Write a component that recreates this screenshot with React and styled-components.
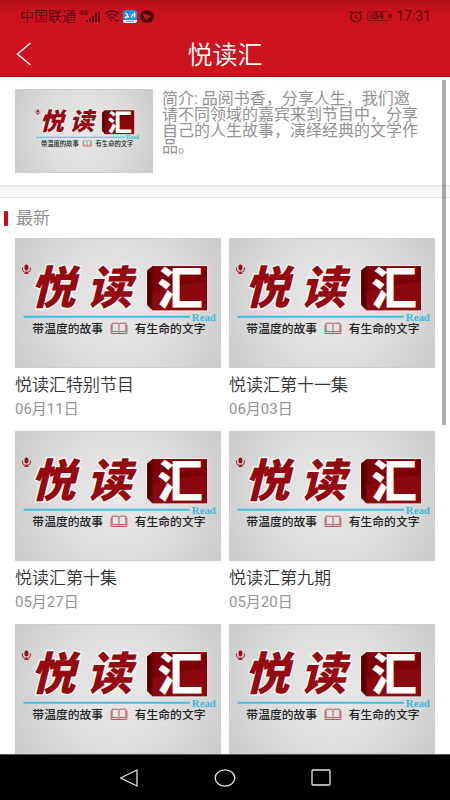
import React from 'react';
import styled, { createGlobalStyle } from 'styled-components';

const GlobalStyle = createGlobalStyle`
  * {
    box-sizing: border-box;
  }

  body {
    margin: 0;
    background: #fff;
    font-family: Roboto, 'Noto Sans CJK SC', sans-serif;
  }
`;

const Screen = styled.div`
  display: flex;
  flex-direction: column;
  height: 100vh;
`;

const Header = styled.header`
  flex: none;
  background: linear-gradient(#b3101a, #cd131d 14px);
  border-bottom: 1px solid #a80d16;
`;

const StatusBar = styled.div`
  display: flex;
  align-items: center;
  justify-content: space-between;
  height: 32px;
  padding: 0 19px 0 20px;
  color: #5c0a10;
  font-size: 14px;
  line-height: 16px;
`;

const StatusGroup = styled.div`
  display: flex;
  align-items: center;
  gap: ${({ $gap }) => $gap}px;
`;

const TitleBar = styled.div`
  display: grid;
  grid-template-columns: 48px 1fr 48px;
  align-items: center;
  height: 44px;
`;

const BackButton = styled.button`
  display: flex;
  align-items: center;
  justify-content: center;
  height: 44px;
  padding: 0;
  border: none;
  background: transparent;
  cursor: pointer;
`;

const PageTitle = styled.h1`
  margin: 0;
  padding-top: 4px;
  color: #fff;
  font-size: 25px;
  font-weight: 350;
  line-height: 40px;
  text-align: center;
`;

const Content = styled.main`
  position: relative;
  flex: 1;
  min-height: 0;
  overflow: hidden;
`;

const ScrollThumb = styled.div`
  position: absolute;
  top: 3px;
  right: 4px;
  width: 4px;
  height: 51%;
  background: rgba(0, 0, 0, 0.32);
`;

const Intro = styled.section`
  display: flex;
  gap: 9px;
  padding: 12px 28px 12px 15px;
`;

const IntroText = styled.p`
  flex: 1;
  margin: 2px 0 0;
  color: #939393;
  font-size: 16px;
  font-weight: 400;
  line-height: 16px;
`;

const Divider = styled.div`
  height: 13px;
  background: #f8f8f8;
  border-top: 2px solid #ececec;
  border-bottom: 1px solid #e6e6e6;
`;

const SectionTitle = styled.h2`
  display: flex;
  align-items: center;
  gap: 8px;
  margin: 0;
  padding: 0 4px;
  color: #888;
  font-size: 17px;
  font-weight: 350;
  line-height: 40px;

  &::before {
    content: '';
    width: 4px;
    height: 15px;
    border-radius: 1px;
    background: #cc0a15;
  }
`;

const Grid = styled.div`
  display: grid;
  grid-template-columns: 1fr 1fr;
  gap: 11px 8px;
  padding: 0 15px;
`;

const Card = styled.a`
  display: block;
  color: #333;
  text-decoration: none;
`;

const Cover = styled.div`
  flex: none;
  width: ${({ $small }) => ($small ? '138px' : '100%')};
  height: ${({ $small }) => ($small ? '84px' : '130px')};
  border: 1px solid #cdcdcf;
  background: radial-gradient(circle at 50% 50%, #e8e8e8, #dedede 50%, #cbcbcd);

  svg {
    display: block;
    width: 100%;
    height: 100%;
  }
`;

const CardTitle = styled.h3`
  margin: 4px 0 0;
  font-size: 17px;
  font-weight: 350;
  line-height: 26px;
`;

const CardDate = styled.time`
  display: block;
  color: #939393;
  font-size: 15px;
  font-weight: 400;
  line-height: 22px;
`;

const NavBar = styled.nav`
  display: flex;
  flex: none;
  align-items: center;
  justify-content: center;
  gap: 48px;
  height: 46px;
  background: #000;
  border-top: 1px solid #555;
`;

const NavButton = styled.button`
  display: flex;
  align-items: center;
  justify-content: center;
  width: 48px;
  height: 44px;
  padding: 0;
  border: none;
  background: transparent;
  cursor: pointer;
`;

const episodes = [
  { id: 1, title: '悦读汇特别节目', date: '06月11日' },
  { id: 2, title: '悦读汇第十一集', date: '06月03日' },
  { id: 3, title: '悦读汇第十集', date: '05月27日' },
  { id: 4, title: '悦读汇第九期', date: '05月20日' },
  { id: 5 },
  { id: 6 },
];

const SignalIcon = () => (
  <svg width="22" height="14" viewBox="0 0 22 14" fill="#5c0a10">
    <text x="0" y="6" fontSize="7" fontWeight="700" fontFamily="Roboto, sans-serif">4G</text>
    <rect x="7" y="11" width="2" height="2" />
    <rect x="10" y="9" width="2" height="4" />
    <rect x="13" y="7" width="2" height="6" />
    <rect x="16" y="4" width="2" height="9" />
    <rect x="19" y="2" width="2" height="11" />
  </svg>
);

const WifiIcon = () => (
  <svg width="16" height="14" viewBox="0 0 16 14" fill="none" stroke="#5c0a10" strokeWidth="1.4">
    <path d="M1 5C5 1 11 1 15 5" />
    <path d="M3 7.500c3-3 7-3 10 0" />
    <path d="M5 10c2-2 4-2 5.500-.5" />
    <circle cx="7.500" cy="11.500" r="1" fill="#5c0a10" stroke="none" />
    <path d="M10.500 11.500h4.500" strokeWidth="1.800" />
  </svg>
);

const AppIcon = () => (
  <svg width="14" height="13" viewBox="0 0 14 13">
    <rect width="14" height="13" rx="3" fill="#2a8cf0" />
    <path d="M0 10h14v.5a2.500 2.500 0 0 1-2.500 2.500h-9A2.500 2.500 0 0 1 0 10.500z" fill="#e9f2fb" />
    <path d="M2 7.500l4-1M2.500 3l2 1.500-1 3M8 7.500l2-3h2.500M11.500 2.500v5" fill="none" stroke="#fff" strokeWidth="1.300" />
    <path d="M3 11.500h8" stroke="#6eb0ef" />
  </svg>
);

const BirdIcon = () => (
  <svg width="14" height="13" viewBox="0 0 14 13">
    <ellipse cx="7" cy="6.500" rx="7" ry="6.300" fill="#4a070c" />
    <path d="M3 3.500c2 1 5 .8 7.500 3L9 7.500 9.500 8.500 7.500 8.300 8 11C6.500 9.500 4 8.500 3.800 6.500L5 6.800C4 6 3 5 3 3.500z" fill="#cd131d" />
  </svg>
);

const AlarmIcon = () => (
  <svg width="14" height="13" viewBox="0 0 14 13" fill="none" stroke="#5c0a10" strokeWidth="1.300">
    <ellipse cx="7" cy="7" rx="5.200" ry="4.800" />
    <path d="M6.500 4.500v3l2.500 1.200M1 3.200 3.500 1M13 3.200 10.500 1" />
  </svg>
);

const BatteryIcon = () => (
  <svg width="25" height="12" viewBox="0 0 25 12">
    <rect x=".5" y="1.500" width="21" height="9" rx="2" fill="none" stroke="#8a0e16" />
    <rect x="2" y="3" width="6" height="6" fill="#a81019" />
    <rect x="22.500" y="4" width="2" height="4" fill="#5c0a10" />
    <text x="6" y="9" fontSize="9" fontWeight="700" fontFamily="Roboto, sans-serif" fill="#5c0a10">34</text>
  </svg>
);

const sans = "'Noto Sans CJK SC', sans-serif";

// Programme logo: brush title, red block, blue rule and slogan
const CoverArt = ({ small }) => (
  <svg viewBox={small ? '-30 -11 256 156' : '0 0 206 130'} role="img" aria-label="悦读汇">
    <g fill="#981018">
      <rect x="8" y="26" width="4" height="6" rx="2" />
      <path d="M6 29v2q0 3 4 3t4-3v-2M10 33v2M8 35h4" fill="none" stroke="#981018" />
    </g>
    <g
      fill="#940a10"
      stroke="#f6f6f6"
      strokeWidth="3"
      strokeLinejoin="round"
      paintOrder="stroke"
      fontFamily={sans}
      fontWeight="900"
      fontStyle="italic"
      fontSize="46"
    >
      <text x="14" y="66">悦</text>
      <text x="71" y="66">读</text>
    </g>
    <path d="M138 27h56v46h-56l-6-6V32z" fill="#7c0006" stroke="#f4f4f4" strokeWidth="1" />
    <path d="M138 28v44l-5-5V32z" fill="#560004" />
    <path d="M138 54q28-8 55-10v28h-55z" fill="#8a080e" />
    <text x="143" y="67" fill="#fff" fontFamily={sans} fontWeight="900" fontSize="46">汇</text>
    <path d="M7 79h169" stroke="#3cc3dc" strokeWidth="2" />
    <text x="178" y="83" fill="#3cb9d6" fontFamily="'Liberation Serif', serif" fontWeight="700" fontSize="11">Read</text>
    <g fill="#222" fontFamily={sans} fontWeight="500" fontSize="12">
      <text x="16" y="95">带温度的故事</text>
      <text x="120" y="95">有生命的文字</text>
    </g>
    <path
      d="M97 94v-8.500h6l1 1 1-1h6V94h-6l-1 1-1-1zM104 86.500V95M96 87v9h16v-9"
      fill="none"
      stroke="#b05a5c"
      strokeWidth="1"
    />
  </svg>
);

const App = () => {
  return (
    <>
      <GlobalStyle />
      <Screen>
        <Header>
          <StatusBar>
            <StatusGroup $gap={3}>
              <span>中国联通</span>
              <SignalIcon />
              <WifiIcon />
              <AppIcon />
              <BirdIcon />
            </StatusGroup>
            <StatusGroup $gap={4}>
              <AlarmIcon />
              <BatteryIcon />
              <span>17:31</span>
            </StatusGroup>
          </StatusBar>
          <TitleBar>
            <BackButton type="button" aria-label="返回">
              <svg width="16" height="24" viewBox="0 0 16 24" fill="none" stroke="#fff" strokeWidth="1.500">
                <path d="M14.500 1 1.500 12l13 11" />
              </svg>
            </BackButton>
            <PageTitle>悦读汇</PageTitle>
          </TitleBar>
        </Header>
        <Content>
          <Intro>
            <Cover $small>
              <CoverArt small />
            </Cover>
            <IntroText>
              简介: 品阅书香，分享人生，我们邀请不同领域的嘉宾来到节目中，分享自己的人生故事，演绎经典的文学作品。
            </IntroText>
          </Intro>
          <Divider />
          <SectionTitle>最新</SectionTitle>
          <Grid>
            {episodes.map((episode) => (
              <Card key={episode.id} href="#">
                <Cover>
                  <CoverArt />
                </Cover>
                {episode.title && <CardTitle>{episode.title}</CardTitle>}
                {episode.date && <CardDate>{episode.date}</CardDate>}
              </Card>
            ))}
          </Grid>
          <ScrollThumb />
        </Content>
        <NavBar>
          <NavButton type="button" aria-label="返回">
            <svg width="20" height="18" viewBox="0 0 20 18" fill="none" stroke="#e6e6e6" strokeWidth="1.300" strokeLinejoin="round">
              <path d="M18 1v16L1.500 9z" />
            </svg>
          </NavButton>
          <NavButton type="button" aria-label="主页">
            <svg width="22" height="18" viewBox="0 0 22 18" fill="none" stroke="#e6e6e6" strokeWidth="1.300">
              <ellipse cx="11" cy="9" rx="9.800" ry="8.200" />
            </svg>
          </NavButton>
          <NavButton type="button" aria-label="最近任务">
            <svg width="20" height="17" viewBox="0 0 20 17" fill="none" stroke="#e6e6e6" strokeWidth="1.300">
              <rect x="1" y="1" width="18" height="15" rx="1" />
            </svg>
          </NavButton>
        </NavBar>
      </Screen>
    </>
  );
};

export default App;
